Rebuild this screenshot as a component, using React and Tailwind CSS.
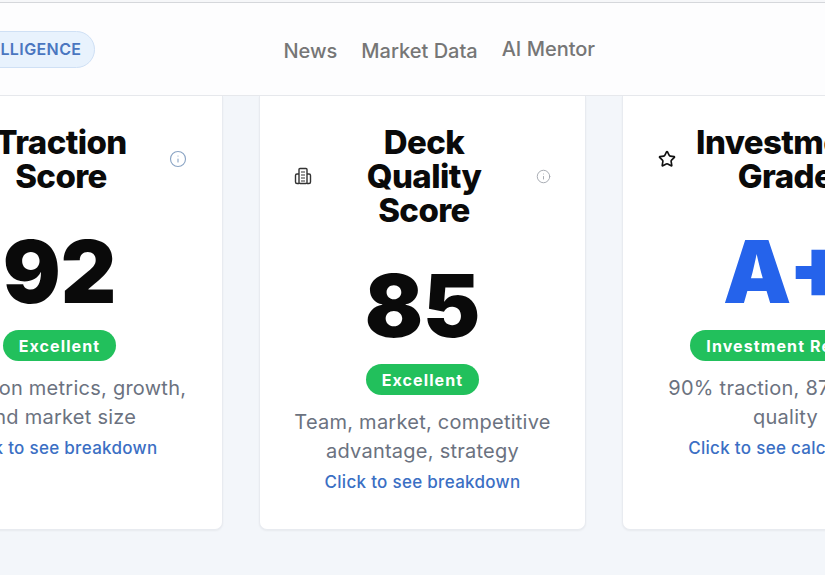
import { Info, Star } from "lucide-react";

const TowerIcon = () => (
  <svg viewBox="0 0 18 18" className="w-[18px] h-[18px] text-[#333] -translate-x-px" fill="none" stroke="currentColor" strokeWidth="1.4">
    <rect x="5" y="1.5" width="8" height="15" rx="1" />
    <path d="M5 7H3a1.5 1.5 0 0 0-1.5 1.5v6.500A1.500 1.500 0 0 0 3 16.500h2" />
    <path d="M13 7h2a1.500 1.500 0 0 1 1.500 1.500v6.500a1.500 1.500 0 0 1-1.500 1.500h-2" />
    <path d="M7 5h4M7 8h4M7 11h4M7 14h4" strokeWidth="1.200" />
  </svg>
);

const cards = [
  {
    title: "Traction Score",
    leftIcon: <div className="w-[21px]" />,
    infoClass: "w-[18px] h-[18px] text-[#8aa4c4]",
    score: "92",
    scoreClass: "text-[#0a0a0a]",
    badge: "Excellent",
    desc: "Based on metrics, growth, and market size",
    link: "Click to see breakdown",
  },
  {
    title: "Deck Quality Score",
    leftIcon: <TowerIcon />,
    infoClass: "w-[15px] h-[15px] text-[#a3a8af] translate-x-px",
    score: "85",
    scoreClass: "text-[#0a0a0a]",
    badge: "Excellent",
    desc: "Team, market, competitive advantage, strategy",
    link: "Click to see breakdown",
  },
  {
    title: "Investment Grade",
    leftIcon: <Star className="w-[18px] h-[18px] text-[#111]" strokeWidth={2.2} />,
    infoClass: "w-[18px] h-[18px] text-[#8aa4c4]",
    score: "A+",
    scoreClass: "text-[#2563eb]",
    badge: "Investment Ready",
    desc: "90% traction, 87% deck quality",
    link: "Click to see calculation",
  },
];

const ScoreCard = ({ card }) => (
  <div className="w-[327px] shrink-0 h-[434px] bg-white rounded-b-lg border-x border-b border-[#e8ebf0] shadow-xs px-[35px] pt-[29px] flex flex-col items-center">
    <div className="w-full flex items-center justify-between">
      {card.leftIcon}
      <h3 className="w-[185px] text-center text-[33px] leading-[34px] font-extrabold tracking-[-0.6px] text-[#0a0a0a]">
        {card.title}
      </h3>
      <Info className={card.infoClass} strokeWidth={1.5} />
    </div>
    <div className={`mt-[24px] text-[86px] leading-[110px] font-black ${card.scoreClass}`}>
      {card.score}
    </div>
    <span className="mt-[3px] h-[31px] flex items-center px-4 rounded-full bg-[#22c05c] text-white text-base font-bold tracking-[1.1px] whitespace-nowrap">
      {card.badge}
    </span>
    <p className="mt-[13px] w-[275px] text-center text-[20px] leading-[29px] tracking-[0.25px] text-[#6b7280]">
      {card.desc}
    </p>
    <span className="mt-[2px] text-[17px] leading-[29px] font-medium tracking-[0.3px] text-[#3b6fc4] whitespace-nowrap">
      {card.link}
    </span>
  </div>
);

export default function App() {
  return (
    <div className="w-[825px] h-[575px] overflow-hidden bg-[#f3f6fa] font-['Inter',sans-serif]">
      <div className="h-[3px] bg-[#f6f7f9] border-b border-[#d5d7db]" />
      <header className="h-[93px] bg-[#fdfdfe] border-b border-[#e6e8ec] flex items-center">
        <span className="ml-[-52px] h-[37px] flex items-center px-[13px] rounded-full bg-[#e8f2fd] border border-[#cfe0f5] text-base font-semibold tracking-[0.4px] text-[#4a76c0] whitespace-nowrap">
          INTELLIGENCE
        </span>
        <nav className="ml-[188px] mt-1 flex gap-6 text-[20px] font-medium text-[#767676]">
          <span>News</span>
          <span>Market Data</span>
          <span className="-translate-y-0.5">AI Mentor</span>
        </nav>
      </header>
      <main className="ml-[-104px] flex gap-9">
        {cards.map((card) => (
          <ScoreCard key={card.title} card={card} />
        ))}
      </main>
    </div>
  );
}
